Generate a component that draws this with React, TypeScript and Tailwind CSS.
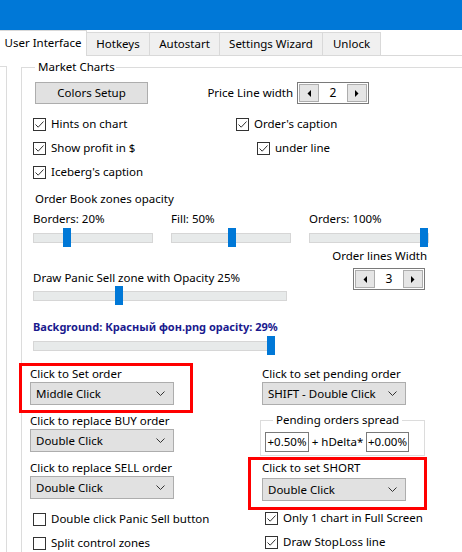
import React from "react";

const tabs = [
    { name: "User Interface", w: "w-[87px]", active: true },
    { name: "Hotkeys", w: "w-[63px]" },
    { name: "Autostart", w: "w-[70px]" },
    { name: "Settings Wizard", w: "w-[103px]" },
    { name: "Unlock", w: "w-[58px]" },
];

const Check = ({ label, checked = true }: { label: string; checked?: boolean }) => (
    <div className="flex h-[24px] items-center gap-[5px]">
        <span className="flex h-[13px] w-[13px] flex-none items-center justify-center border border-[#333333] bg-white">
            {checked ? (
                <svg width="11" height="11" viewBox="0 0 11 11">
                    <path d="M1.5 5.5 L4.2 8.2 L9.5 2.5" fill="none" stroke="#333333" strokeWidth="1" />
                </svg>
            ) : null}
        </span>
        <span className="whitespace-nowrap">{label}</span>
    </div>
);

const Slider = ({ className, pos }: { className: string; pos: number }) => (
    <div className={"relative flex h-[19px] items-center " + className}>
        <div className="h-[10px] w-full border border-[#d6d6d6] bg-[#e7eaea]" />
        <div className="absolute top-0 h-[19px] w-[8px] bg-[#0078d7]" style={{ left: pos }} />
    </div>
);

const Arrow = ({ dir }: { dir: "l" | "r" }) => (
    <svg width="4" height="7" viewBox="0 0 4 7">
        <path d={dir === "l" ? "M4 0 L0.5 3.5 L4 7 Z" : "M0 0 L3.5 3.5 L0 7 Z"} fill="#000" />
    </svg>
);

const Spinner = ({ value }: { value: string }) => (
    <div className="flex h-[22px] w-[72px] flex-none items-stretch justify-between border border-[#7a7a7a] bg-white p-[1px]">
        <div className="flex w-[20px] items-center justify-center border border-[#adadad] bg-[#e5e5e5]">
            <Arrow dir="l" />
        </div>
        <span className="flex items-center text-[12px]">{value}</span>
        <div className="flex w-[20px] items-center justify-center border border-[#adadad] bg-[#e5e5e5]">
            <Arrow dir="r" />
        </div>
    </div>
);

const Select = ({ value }: { value: string }) => (
    <div className="flex h-[23px] w-[144px] items-center justify-between border border-[#adadad] bg-[#e1e1e1] pl-[5px] pr-[8px]">
        <span className="whitespace-nowrap">{value}</span>
        <svg width="9" height="5" viewBox="0 0 9 5">
            <path d="M0.5 0.5 L4.5 4.5 L8.5 0.5" fill="none" stroke="#333333" strokeWidth="1" />
        </svg>
    </div>
);

const Field = ({ label, value }: { label: string; value: string }) => (
    <div className="w-[144px]">
        <div className="h-[16px] whitespace-nowrap">{label}</div>
        <Select value={value} />
    </div>
);

export default function App() {
    return (
        <div className="h-[552px] w-[462px] overflow-hidden bg-white font-['Noto_Sans',sans-serif] text-[11.5px] leading-[16px] text-black">
            <div className="h-[30px] bg-[#0078d7]" />

            {/* tab strip */}
            <div className="flex h-[26px] items-end">
                {tabs.map((tab) => (
                    <div
                        key={tab.name}
                        className={
                            tab.active
                                ? "flex h-[26px] flex-none items-center justify-center border-r border-t border-[#d9d9d9] bg-white pb-[1px] " + tab.w
                                : "flex h-[24px] flex-none items-center justify-center border-b border-r border-t border-[#d9d9d9] bg-[#f0f0f0] " + tab.w
                        }
                    >
                        {tab.name}
                    </div>
                ))}
                <div className="h-[24px] flex-1 border-b border-[#d9d9d9]" />
            </div>

            <div className="flex items-start">
                <div className="mt-[10px] h-[490px] w-[7px] flex-none border-r border-t border-[#dcdcdc]" />

                <fieldset className="ml-[14px] mt-[3px] w-[460px] flex-none border-l border-t border-[#dcdcdc] pl-[11px] pt-[7px]">
                    <legend className="ml-[2px] pl-[3px] pr-[1px]">Market Charts</legend>

                    <div className="flex h-[22px] items-center">
                        <div className="ml-[2px] flex h-[22px] w-[113px] items-center justify-center border border-[#adadad] bg-[#e1e1e1]">
                            Colors Setup
                        </div>
                        <div className="flex w-[145px] justify-end whitespace-nowrap">Price Line width</div>
                        <div className="ml-[4px]">
                            <Spinner value="2" />
                        </div>
                    </div>

                    <div className="mt-[8px] grid grid-cols-[203px_1fr]">
                        <Check label="Hints on chart" />
                        <Check label="Order's caption" />
                        <Check label="Show profit in $" />
                        <div className="pl-[21px]">
                            <Check label="under line" />
                        </div>
                        <Check label="Iceberg's caption" />
                        <div />
                    </div>

                    <div className="ml-[2px] mt-[7px]">Order Book zones opacity</div>

                    <div className="mt-[4px] grid grid-cols-[138px_138px_138px]">
                        <div>
                            <div>Borders: 20%</div>
                            <Slider className="mt-[1px] w-[120px]" pos={30} />
                        </div>
                        <div>
                            <div>Fill: 50%</div>
                            <Slider className="mt-[1px] w-[120px]" pos={57} />
                        </div>
                        <div>
                            <div>Orders: 100%</div>
                            <Slider className="mt-[1px] w-[120px]" pos={111} />
                        </div>
                    </div>

                    <div className="mt-[1px] flex">
                        <div className="w-[254px] pt-[22px]">
                            <div className="whitespace-nowrap">Draw Panic Sell zone with Opacity 25%</div>
                            <Slider className="w-[254px]" pos={82} />
                        </div>
                        <div className="flex w-[140px] flex-col items-end">
                            <div className="whitespace-nowrap">Order lines Width</div>
                            <div className="mr-[2px] mt-[4px]">
                                <Spinner value="3" />
                            </div>
                        </div>
                    </div>

                    <div className="mt-[14px] whitespace-nowrap text-[11px] font-bold text-[#1a1a8e]">
                        Background: Красный фон.png opacity: 29%
                    </div>
                    <Slider className="mt-[1px] w-[242px]" pos={234} />

                    <div className="ml-[-3px] grid grid-cols-[232px_1fr]">
                        {/* left column */}
                        <div>
                            <div className="relative mt-[11px]">
                                <Field label="Click to Set order" value="Middle Click" />
                                <div className="absolute -left-[11px] -top-[3px] h-[50px] w-[174px] border-[3px] border-[#ff0000]" />
                            </div>
                            <div className="mt-[8px]">
                                <Field label="Click to replace BUY order" value="Double Click" />
                            </div>
                            <div className="mt-[8px]">
                                <Field label="Click to replace SELL order" value="Double Click" />
                            </div>
                            <div className="ml-[3px] mt-[8px]">
                                <Check label="Double click Panic Sell button" checked={false} />
                                <Check label="Split control zones" checked={false} />
                            </div>
                        </div>

                        {/* right column */}
                        <div>
                            <div className="mt-[11px]">
                                <Field label="Click to set pending order" value="SHIFT - Double Click" />
                            </div>
                            <fieldset className="ml-[-2px] mt-[7px] w-[165px] border border-[#dcdcdc] pb-[3px] pl-[4px] pt-[4px]">
                                <legend className="ml-[8px] px-[3px]">Pending orders spread</legend>
                                <div className="flex items-center">
                                    <div className="flex h-[20px] w-[44px] items-center justify-center border border-[#7a7a7a]">
                                        +0.50%
                                    </div>
                                    <div className="w-[57px] text-center whitespace-nowrap">+ hDelta*</div>
                                    <div className="flex h-[20px] w-[43px] items-center justify-center border border-[#7a7a7a]">
                                        +0.00%
                                    </div>
                                </div>
                            </fieldset>
                            <div className="relative mt-[4px] w-[144px]">
                                <div className="h-[16px]">Click to set SHORT</div>
                                <div className="mt-[2px]">
                                    <Select value="Double Click" />
                                </div>
                                <div className="absolute -left-[14px] -top-[3px] h-[53px] w-[179px] border-[3px] border-[#ff0000]" />
                            </div>
                            <div className="ml-[3px] mt-[5px]">
                                <Check label="Only 1 chart in Full Screen" />
                                <Check label="Draw StopLoss line" />
                            </div>
                        </div>
                    </div>
                </fieldset>
            </div>
        </div>
    );
}
